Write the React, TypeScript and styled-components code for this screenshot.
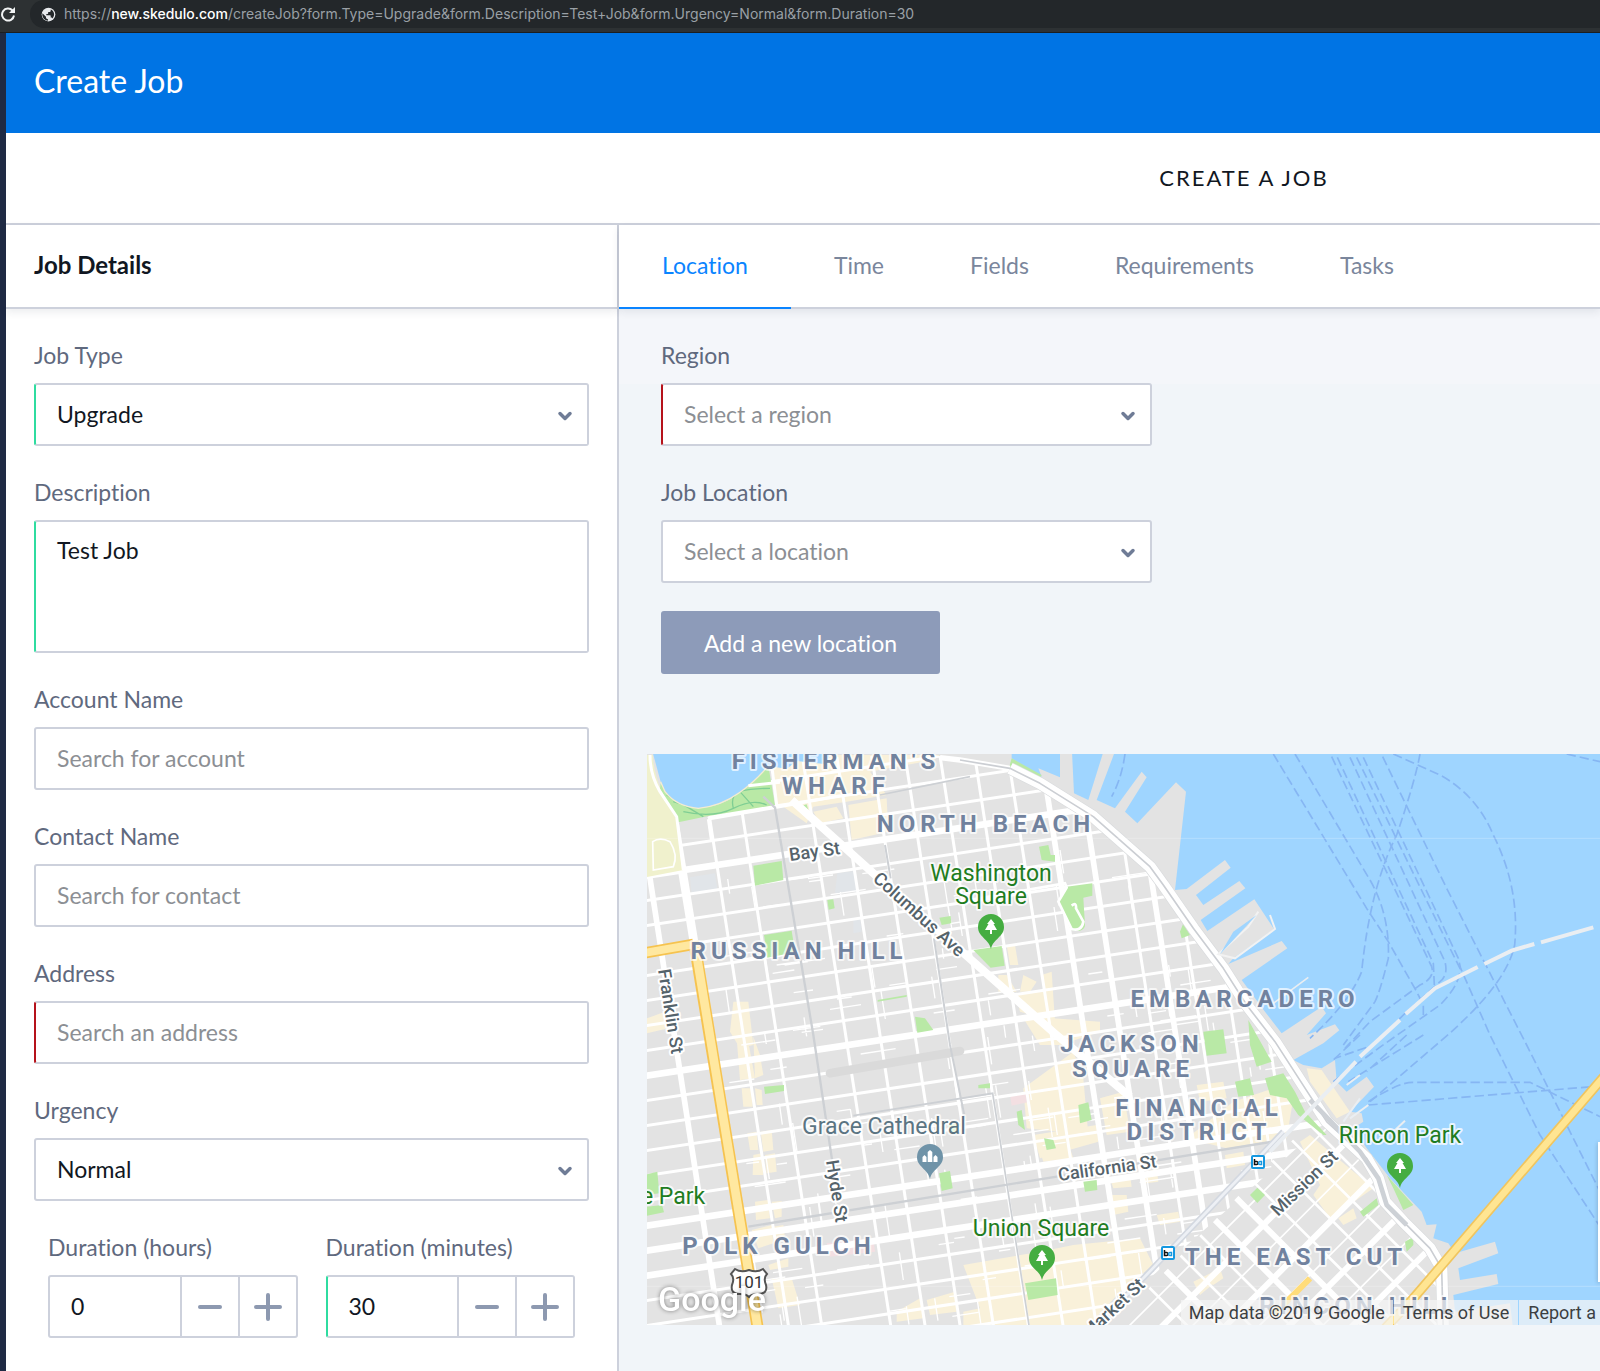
import React, { useState } from "react";
import styled, { createGlobalStyle } from "styled-components";

const sans = `Lato, "Open Sans", "Liberation Sans", sans-serif`;
const roboto = `Roboto, "Liberation Sans", sans-serif`;

const color = {
  border: "#cdd1dc",
  text: "#111722",
  label: "#5f697e",
  muted: "#8c8f94",
  tab: "#7a869c",
  accent: "#0a84ff",
  header: "#0074e4",
  valid: "#2fdca0",
  invalid: "#b5121b",
  icon: "#6f7c96",
};

const GlobalStyle = createGlobalStyle`
  *, *::before, *::after { box-sizing: border-box; }
  html, body, #root { min-height: 100vh; }
  body {
    margin: 0;
    background: #fff;
    color: ${color.text};
    font: 400 23px/28px ${sans};
    font-variant-ligatures: none;
    overflow-x: hidden;
  }
  #root { display: flex; flex-direction: column; }
  button, input, select, textarea { font: inherit; font-variant-ligatures: none; color: inherit; }
`;

/* ---------- browser bar ---------- */

const BrowserBar = styled.div`
  display: flex;
  align-items: flex-start;
  height: 33px;
  background: #2d3133;
  border-bottom: 1px solid #1b1e20;
`;

const ReloadButton = styled.button`
  display: flex;
  align-items: center;
  width: 30px;
  height: 28px;
  padding: 0;
  border: 0;
  background: none;
  color: #f1f3f4;
`;

const AddressBar = styled.div`
  display: flex;
  flex: 1;
  align-items: center;
  gap: 8px;
  height: 28px;
  padding-left: 11px;
  border-radius: 14px 0 0 14px;
  background: #23272a;
  color: #9aa0a6;
  font: 400 14px/28px Inter, Roboto, sans-serif;
  white-space: nowrap;
  overflow: hidden;
`;

const Host = styled.span`
  color: #fff;
  font-weight: 500;
`;

/* ---------- page frame ---------- */

const Page = styled.div`
  display: flex;
  flex: 1;
  flex-direction: column;
  border-left: 6px solid #1f2a44;
`;

const Header = styled.header`
  display: flex;
  align-items: center;
  height: 100px;
  padding: 0 28px 4px;
  background: ${color.header};
  color: #fff;
`;

const PageTitle = styled.h1`
  margin: 0;
  font-size: 32px;
  font-weight: 400;
  line-height: 40px;
`;

const SubHeader = styled.div`
  display: flex;
  align-items: center;
  justify-content: center;
  height: 92px;
  padding-left: 882px;
  border-bottom: 2px solid ${color.border};
`;

const SubTitle = styled.h2`
  margin: 0;
  font-size: 22px;
  font-weight: 400;
  line-height: 28px;
  letter-spacing: 2px;
  text-transform: uppercase;
  white-space: nowrap;
`;

const Columns = styled.div`
  display: grid;
  flex: 1;
  grid-template-columns: 613px minmax(0, 1fr);
`;

const DetailsPanel = styled.section`
  border-right: 2px solid ${color.border};
  background: #fff;
`;

const PanelBar = styled.div`
  position: relative;
  display: flex;
  align-items: center;
  height: 84px;
  border-bottom: 2px solid ${color.border};
  background: #fff;
  box-shadow: 0 3px 8px rgba(30, 40, 70, 0.09);
`;

const PanelTitle = styled.h3`
  margin: 0;
  padding: 0 28px 2px;
  font-size: 24px;
  font-weight: 700;
`;

const DetailsForm = styled.form`
  display: flex;
  flex-direction: column;
  gap: 32px;
  padding: 32px 28px;
`;

const TabPanel = styled.section`
  display: flex;
  flex-direction: column;
  min-width: 0;
`;

const Tab = styled.button<{ $active?: boolean }>`
  height: 84px;
  margin-bottom: -2px;
  padding: 0 43px 2px;
  border: 0;
  border-bottom: 2px solid ${(p) => (p.$active ? color.accent : "transparent")};
  background: none;
  color: ${(p) => (p.$active ? color.accent : color.tab)};
  cursor: pointer;
`;

const LocationBody = styled.div`
  flex: 1;
  padding: 32px 0 46px 28px;
  background: linear-gradient(#f4f6fa 75px, #f1f5f9 75px);
`;

const LocationForm = styled.form`
  display: flex;
  flex-direction: column;
  gap: 32px;
  max-width: 505px;
  padding-left: 14px;
`;

const Actions = styled.div`
  padding: 28px 14px 80px;
`;

const AddButton = styled.button`
  display: block;
  height: 63px;
  padding: 0 43px;
  border: 0;
  border-radius: 3px;
  background: #8d9bb9;
  color: #fff;
`;

/* ---------- form controls ---------- */

type Status = "valid" | "invalid" | undefined;

const edge = (s: Status) =>
  s === "valid" ? color.valid : s === "invalid" ? color.invalid : color.border;

const Field = styled.div`
  display: flex;
  flex: 1;
  flex-direction: column;
  gap: 14px;
  min-width: 0;
`;

const Label = styled.label`
  color: ${color.label};
  line-height: 28px;
  white-space: nowrap;
`;

const TextInput = styled.input<{ $status?: Status }>`
  width: 100%;
  height: 63px;
  padding: 0 21px 2px;
  border: 2px solid ${color.border};
  border-left-color: ${(p) => edge(p.$status)};
  border-radius: 3px;
  background: #fff;
  outline: 0;
  &::placeholder { color: ${color.muted}; opacity: 1; }
`;

const TextArea = styled.textarea<{ $status?: Status }>`
  display: block;
  width: 100%;
  height: 133px;
  padding: 14px 21px;
  border: 2px solid ${color.border};
  border-left-color: ${(p) => edge(p.$status)};
  border-radius: 3px;
  background: #fff;
  outline: 0;
  resize: none;
`;

const SelectWrap = styled.div`
  position: relative;
`;

const Select = styled.select<{ $status?: Status; $empty?: boolean }>`
  display: block;
  width: 100%;
  height: 63px;
  padding: 0 56px 2px 21px;
  border: 2px solid ${color.border};
  border-left-color: ${(p) => edge(p.$status)};
  border-radius: 3px;
  background: #fff;
  color: ${(p) => (p.$empty ? color.muted : color.text)};
  appearance: none;
  outline: 0;
`;

const Chevron = styled.svg`
  position: absolute;
  top: 26px;
  right: 16px;
  width: 16px;
  height: 14px;
  pointer-events: none;
`;

const DurationRow = styled.div`
  display: flex;
  gap: 28px;
  padding: 0 14px;
`;

const Stepper = styled.div<{ $status?: Status }>`
  display: flex;
  height: 63px;
  border: 2px solid ${color.border};
  border-left-color: ${(p) => edge(p.$status)};
  border-radius: 3px;
  background: #fff;
`;

const StepInput = styled.input`
  flex: 1;
  min-width: 0;
  padding: 0 21px 2px;
  border: 0;
  background: none;
  outline: 0;
`;

const StepButton = styled.button`
  display: flex;
  align-items: center;
  justify-content: center;
  width: 58px;
  padding: 0;
  border: 0;
  border-left: 2px solid ${color.border};
  background: none;
  color: #8d99b0;
`;

/* ---------- map ---------- */

const MapFrame = styled.div`
  position: relative;
  height: 571px;
  overflow: hidden;
  background: #9fd5ff;
`;

const MapSvg = styled.svg`
  display: block;
  width: 100%;
  height: 571px;
  font-family: ${roboto};
`;

const MapFooter = styled.div`
  position: absolute;
  right: 0;
  bottom: 0;
  display: flex;
  height: 25px;
  color: #3c3f42;
  font: 400 18px/25px ${roboto};
  white-space: nowrap;
`;

const FooterText = styled.span`
  padding: 0 8px;
  background: rgba(245, 245, 245, 0.72);
`;

const FooterLink = styled.a`
  margin-left: 1px;
  padding: 0 9px;
  background: rgba(245, 245, 245, 0.72);
  color: inherit;
  text-decoration: none;
  &:last-child { padding-right: 4px; }
`;

const ZoomControl = styled.div`
  position: absolute;
  right: 0;
  bottom: 43px;
  width: 2px;
  height: 140px;
  background: #fff;
  box-shadow: 0 1px 4px rgba(0, 0, 0, 0.3);
`;

const District = styled.text`
  fill: #71829e;
  stroke: rgba(255, 255, 255, 0.7);
  stroke-width: 4px;
  stroke-linejoin: round;
  paint-order: stroke;
  font-size: 24px;
  font-weight: 700;
  letter-spacing: 5px;
  text-anchor: middle;
`;

const Place = styled.text<{ $tone?: string }>`
  fill: ${(p) => p.$tone || "#1f7d1f"};
  stroke: rgba(255, 255, 255, 0.75);
  stroke-width: 4px;
  stroke-linejoin: round;
  paint-order: stroke;
  font-size: 23px;
  text-anchor: middle;
`;

const Street = styled.text`
  fill: #55636b;
  stroke: #fff;
  stroke-width: 4px;
  stroke-linejoin: round;
  paint-order: stroke;
  font-size: 18px;
  font-weight: 500;
`;

const Wordmark = styled.text`
  fill: #fff;
  font-size: 34px;
  font-weight: 500;
  filter: drop-shadow(0 0 2px rgba(0, 0, 0, 0.45));
`;

/* Map geometry is drawn on a plane three times finer than the screen. */

const LAND =
  "M0 0H1115V40L1205 95L1195 70L1260 97V0H1295L1302 145L1345 165L1388 27L1396 0H1430L1422 27L1370 165L1425 190L1505 80L1520 97L1455 200L1492 235L1608 112L1638 140L1605 435L1640 432L1755 345L1772 368L1668 450L1690 480L1798 408L1816 430L1682 525L1702 558L1843 463L1902 552L1780 640L1765 657L1925 588L1942 610L1805 705L1875 800L1925 865L2045 785L2058 805L2000 870L2085 838L2098 856L2050 895L1960 945L1990 960L2045 970L2085 945L2090 1010L2120 1040L2180 995L2202 1025L2130 1100L2165 1105L2170 1130L2140 1150L2180 1210L2250 1300L2345 1400L2360 1440L2390 1438L2380 1480L2425 1495L2445 1525L2565 1490L2575 1525L2455 1570L2460 1605L2570 1587L2575 1617L2440 1650L2445 1700L2610 1675L2620 1760H0Z";

const WATERFRONT: [number, number][] = [
  [960, 45], [1110, 70], [1200, 115], [1360, 215], [1530, 365], [1570, 420],
  [1660, 550], [1750, 670], [1820, 780], [1905, 890], [2060, 1130], [2180, 1240],
  [2215, 1300], [2235, 1370], [2290, 1430], [2370, 1510], [2405, 1570], [2410, 1760],
];

const pts = (list: [number, number][]) => list.map((p) => p.join(" ")).join(" ");

const CITY = `0 380 100 240 200 220 400 40 880 30 ${pts(WATERFRONT.slice(0, 11))} 1370 1740 1340 1760 0 1760`;
const SOMA = `2060 1080 1400 1760 2410 1760 ${pts(WATERFRONT.slice(10).reverse())}`;

const WIDE_ROWS = [0, 8, 14, 15, 16];
const rows = Array.from({ length: 30 }, (_, i) => i - 3).map((k) => ({
  y: 395 + 75 * k,
  w: WIDE_ROWS.includes(k) ? 20 : 9,
}));
const cols = [-32, 175, 275, 482, 585, 690, 790, 895, 999, 1099, 1199, 1306, 1404, 1472, 1550, 1650, 1750].map(
  (x) => ({ x, w: [-32, 1199, 1306, 1472].includes(x) ? 17 : 9 })
);

/* Short lanes inside the blocks, spread by a small repeatable sequence. */
const lanes = (() => {
  let s = 17;
  const next = () => (s = (s * 16807) % 2147483647) / 2147483647;
  return Array.from({ length: 210 }, () => {
    const x = 250 + next() * 1650;
    const y = 300 + next() * 1420;
    const l = 30 + next() * 80;
    return next() > 0.5
      ? `M${x | 0} ${y | 0}l${l | 0} ${(-l * 0.155) | 0}`
      : `M${x | 0} ${y | 0}l${(l * 0.14) | 0} ${(l * 0.9) | 0}`;
  }).join("");
})();

const SHOPS = [
  "M400 60L520 30H900L880 45L690 80L740 150L620 170L520 185L500 235L430 185L410 180Z",
  "M520 200L590 185L610 220L540 235Z M625 180L740 160L745 260L635 285Z",
  "M280 770H325L340 900L300 910L270 860Z M290 880L325 890L345 1000L300 1005Z M340 875L360 930L370 990L345 1000Z",
  "M305 1030H335L338 1085H310Z M345 1030L365 1035L368 1080H350Z M322 1165L350 1160L355 1215H330Z M362 1160L395 1155L400 1215L370 1220Z",
  "M340 1230L365 1225L370 1290L338 1290Z M375 1230L405 1225L410 1280L380 1285Z M345 1370L385 1365L390 1420L348 1425Z M395 1370L425 1368V1415L405 1420Z",
  "M335 1455L395 1440L400 1495L355 1510Z M400 1445L430 1440L435 1480L405 1490Z M385 1560L445 1540V1565L390 1575Z M395 1600H455L480 1680L415 1690Z M770 1700L840 1660L850 1720L770 1730Z M860 1665L945 1640L950 1700L870 1710Z",
  "M21 820L75 800L85 850L21 865Z",
  "M1100 600H1125L1135 660H1110Z M1075 690H1100L1130 740H1075Z M1150 690L1190 710L1170 740H1140Z M1205 690L1235 680L1245 830L1140 800L1130 750L1215 735Z",
  "M1150 820L1240 820L1380 830V860L1260 900H1200Z",
  "M1150 1030L1300 920L1330 1000L1345 1170L1160 1150Z M1380 1060L1450 1040L1470 1160L1400 1170Z",
  "M1180 1170L1370 1140L1375 1190L1200 1240Z",
  "M1670 1020L1750 1010L1760 1060L1680 1070Z M1780 1070L1900 1030L1960 1060L1940 1180L1760 1210L1640 1180Z",
  "M1200 1220L1290 1210L1300 1240L1210 1250Z M1755 1230L1810 1220L1815 1260L1760 1270Z M1500 1290L1550 1270L1555 1310L1520 1315Z M1410 1300L1470 1290L1475 1325L1420 1330Z",
  "M970 1560L1200 1520L1300 1500L1500 1480L1540 1560L1440 1640L1350 1740H970V1700L1020 1690Z",
  "M1405 1350L1460 1350L1465 1400L1420 1410Z M1550 1410L1615 1400L1620 1430L1560 1440Z",
  "M2000 970L2045 975L2130 1100L2090 1120L2010 1010Z M1980 1190L2010 1170L2200 1330L2070 1420L2020 1350L2040 1320Z M2095 1420L2140 1390L2150 1420L2110 1440Z M1700 1600L1740 1570L1750 1600L1720 1620Z",
  "M1660 1610L1720 1580L1740 1600L1680 1650Z",
];

const PARKS = [
  "M340 362L425 348L430 405L345 422Z",
  "M372 570L455 557L465 622L382 638Z",
  "M562 465L580 463L584 490L566 494Z",
  "M898 518L932 513L934 535L905 540Z",
  "M713 765L800 750V755L713 770Z",
  "M825 815L855 820L880 855L832 863Z",
  "M485 182L500 178L505 195Z",
  "M372 1025L432 1020V1038L375 1047Z",
  "M21 1288L52 1280L58 1345L21 1350Z M21 1385L66 1380L72 1402L21 1412Z",
  "M897 1285L930 1278L938 1330L905 1338Z M925 1140L955 1135V1160L930 1165Z",
  "M1115 40L1205 90L1195 108L1108 65Z",
  "M1197 305L1225 300L1232 330H1245V350L1205 345Z",
  "M1280 425L1357 415V452L1330 458L1335 540C1335 560 1300 565 1290 548L1255 470Z",
  "M1000 615L1085 603L1094 662L1052 668Z",
  "M1690 860L1750 853L1760 925L1700 932Z M1825 825L1850 870L1895 950L1850 965L1830 900Z",
  "M1620 560L1630 535L1650 570L1625 580Z",
  "M1785 1010L1830 1000L1842 1050L1795 1055Z M1875 1000L1930 985L1965 1040L1995 1100L2060 1170L2050 1170L1975 1110L1940 1060L1890 1050Z",
  "M1315 1080L1345 1072L1355 1125L1320 1135Z M1130 1100L1145 1095L1155 1155L1135 1140Z M1212 1180L1240 1185L1248 1210L1220 1215Z",
  "M1330 1310L1370 1305L1372 1335L1335 1340Z M1015 1020L1050 1015V1030H1015Z",
  "M1155 1615L1248 1600L1253 1650L1165 1665Z",
  "M1830 1350L1852 1328L1875 1350L1852 1374Z",
  "M2160 1400L2210 1360L2215 1380L2170 1415Z M2240 1290L2320 1380L2290 1395L2260 1330Z M2295 1490L2320 1475V1500L2300 1520Z",
];

const FERRIES = [
  "M1900 27L2180 490L2245 590L2330 740L2350 780V810",
  "M1965 27L2190 405Q2250 510 2245 640Q2220 740 2205 770L2110 900",
  "M2075 35L2375 665Q2385 700 2340 720L2190 830L2115 910",
  "M2092 37L2380 655L2383 720",
  "M2130 37L2415 650Q2425 690 2400 710L2290 810L2200 900L2085 940",
  "M2150 37L2425 600L2460 670Q2460 720 2400 780L2215 910L2080 1010",
  "M2170 37L2455 640L2462 670L2550 870L2700 1170L2880 1445",
  "M2228 35L2420 430L2660 900L2740 1060L2880 1340",
  "M2340 27Q2325 110 2270 270Q2190 430 2165 680Q2130 770 2010 880",
  "M2260 27L2400 90Q2510 150 2560 270Q2640 430 2624 600Q2600 720 2400 890L2190 1070",
  "M2780 27L2880 50",
  "M1455 27Q1445 100 1415 155",
  "M2185 1080L2880 1023 M2185 1070Q2280 1010 2320 1012H2670L2880 1115",
  "M2350 870L2125 1010 M2300 870L2180 980 M2160 870L2080 945",
];

const WEST_BAY =
  "M32 0L62 110L75 140Q110 185 175 190Q240 185 300 142Q350 105 385 62L440 72L470 48L560 58L575 0Z";

const trace = (list: [number, number][]) => "M" + list.map((p) => p.join(" ")).join("L");

function TreePin({ x, y }: { x: number; y: number }) {
  return (
    <g transform={`translate(${x} ${y})`}>
      <path d="M0 22C-2 12-13 10-13 0A13 13 0 0 1 13 0C13 10 2 12 0 22Z" fill="#45ad41" />
      <path d="M0-8L4-3H2.500L6 3H1V7H-1V3H-6L-2.500-3H-4Z" fill="#fff" />
    </g>
  );
}

function LandmarkPin({ x, y }: { x: number; y: number }) {
  return (
    <g transform={`translate(${x} ${y})`}>
      <path d="M0 22C-2 12-13 10-13 0A13 13 0 0 1 13 0C13 10 2 12 0 22Z" fill="#6f93a8" />
      <path d="M-7.500 5V0L-5.500-2L-3.500 0V5Z M-2.300 5V-5L0-7L2.300-5V5Z M3.500 5V0L5.500-2L7.500 0V5Z" fill="#fff" />
    </g>
  );
}

function Station({ x, y }: { x: number; y: number }) {
  return (
    <g transform={`translate(${x} ${y})`}>
      <rect x="-6" y="-6" width="12" height="12" rx="1" fill="#fff" stroke="#1698e0" strokeWidth="2" />
      <path d="M-3.500-3V2.500H-1.500A1.500 1.500 0 0 0-1.500-.5H-3.500" fill="none" stroke="#111" strokeWidth="1.500" />
      <path d="M3.500-.5V2.500H2A1.500 1.500 0 0 1 2-.5Z" fill="none" stroke="#1698e0" strokeWidth="1.500" />
    </g>
  );
}

function CityMap() {
  return (
    <MapSvg viewBox="0 0 953 571" preserveAspectRatio="xMinYMin slice" role="img" aria-label="Map of San Francisco">
      <defs>
        <clipPath id="city"><polygon points={CITY} /></clipPath>
        <clipPath id="soma"><polygon points={SOMA} /></clipPath>
      </defs>
      <g transform="scale(0.33333) translate(-21 -27)" fill="none">
        <path d={LAND} fill="#e3e3e3" />
        <g fill="#f9f1da">{SHOPS.map((d) => <path key={d} d={d} />)}</g>
        <g fill="#e1e5e9">
          <path d="M150 397L225 385L232 432L155 445Z M592 385L645 377L650 440L585 445Z M640 520L660 515L665 560L640 565Z" />
        </g>
        <path d="M1110 1050L1165 1040L1170 1070L1115 1082Z M560 1495L700 1480L705 1520L570 1535Z" fill="#f3dfe2" />

        <g clipPath="url(#city)" stroke="#fff">
          <path d={lanes} strokeWidth="4" />
          {rows.map((r) => <path key={r.y} d={`M0 ${r.y}L2300 ${r.y - 350}`} strokeWidth={r.w} />)}
          {cols.map((c) => <path key={c.x} d={`M${c.x} 0L${c.x + 273} 1760`} strokeWidth={c.w} />)}
          <path d="M98 200L165 610" strokeWidth="26" />
        </g>
        <path d="M570 985L960 918" stroke="#dadada" strokeWidth="26" strokeLinecap="round" />

        <g clipPath="url(#soma)" stroke="#fff">
          {[3210, 3400, 3600, 3790].map((n) => <path key={n} d={`M${n - 1760} 1760L${n - 1000} 1000`} strokeWidth="5" />)}
          {[3310, 3500, 3690, 3880].map((n) => <path key={n} d={`M${n - 1760} 1760L${n - 1000} 1000`} strokeWidth="18" />)}
          {[-100, 90, 210, 530, 650, 770, 870].map((n) => <path key={n} d={`M${1000 + n} 1000L${1760 + n} 1760`} strokeWidth="8" />)}
          {[0, 300, 430].map((n) => <path key={n} d={`M${1000 + n} 1000L${1760 + n} 1760`} strokeWidth="18" />)}
        </g>
        <g fill="#b9e9a6">{PARKS.map((d) => <path key={d} d={d} />)}</g>

        <path d="M0 30H38Q45 130 110 215L130 375L0 400Z" fill="#f0f1cd" />
        <path d="M38 290Q60 275 90 290Q115 330 100 365L40 375Z" stroke="#fff" strokeWidth="5" />
        <path d="M62 115Q100 185 175 190Q250 185 300 142Q350 105 385 62L405 180L205 213L115 232L60 130Z" fill="#b9e9a6" />
        <path d="M100 170Q190 200 240 165T390 130 M130 200Q220 220 280 190T380 180 M280 190Q270 150 300 140L340 185 M80 150L140 185L190 215" stroke="#7fce94" strokeWidth="4" />
        <path d={WEST_BAY} fill="#9fd5ff" />
        <path d="M62 110L75 140Q110 185 175 190Q240 185 300 142Q350 105 385 62" stroke="#f4ecd0" strokeWidth="4" />
        <path d="M30 30Q30 90 60 140L110 215L130 375 M325 122L420 112 M205 222L215 290 M205 222L410 187L600 152" stroke="#fff" strokeWidth="9" />
        <path d="M395 60L410 180" stroke="#fff" strokeWidth="9" />

        <path d="M455 165L700 385L1000 650L1240 862L1470 1055" stroke="#fff" strokeWidth="24" />
        <g stroke="#cdd0d4" strokeWidth="7">
          <path d="M370 155L405 188L520 870L580 1270" />
          <path d="M735 300L752 400 M882 580L930 900L975 1120" strokeWidth="6" />
          <path d="M640 1112L1058 1045L1170 1760" strokeWidth="5" />
          <path d="M325 1445L960 1342L1250 1295L1910 1188" />
          <path d="M720 150L990 95" strokeWidth="5" />
        </g>

        <path d="M1930 1160L1500 1610L1370 1740" stroke="#d3d8e0" strokeWidth="18" />
        <path d="M1930 1160L1500 1610L1370 1740" stroke="#edf0f5" strokeWidth="8" />

        <path d="M900 38L960 45L1110 70" stroke="#fff" strokeWidth="16" />
        <path d={trace(WATERFRONT.slice(1))} stroke="#d9dbdd" strokeWidth="38" strokeLinejoin="round" />
        <path d={trace(WATERFRONT.slice(1))} stroke="#fff" strokeWidth="34" strokeLinejoin="round" />
        <path d={trace(WATERFRONT)} stroke="#cbced3" strokeWidth="5" strokeLinejoin="round" />
        <path d="M2010 1065L2160 1220L2215 1300L2240 1380L2300 1440" stroke="#cdd1d6" strokeWidth="14" />
        <path d="M1295 482Q1310 470 1308 490L1330 530Q1325 560 1295 552L1255 470L1280 428L1275 415L960 470" stroke="#fff" strokeWidth="8" />
        <path d="M1890 510L1905 552L1785 640L1735 628L1825 545L1855 500" stroke="#f2f2f2" strokeWidth="6" />
        <path d="M1740 628L1850 510L1780 560Z" fill="#9fd5ff" />

        <g stroke="#86b6f3" strokeWidth="5" strokeDasharray="28 12">{FERRIES.map((d) => <path key={d} d={d} />)}</g>
        <path d="M0 280H2900 M0 1624H2900" stroke="#fff" strokeWidth="2" opacity="0.35" />

        <g stroke="#eaeef2" strokeWidth="12">
          <path d="M2860 547L2703 592 M2683 597L2615 617L2533 657 M2513 666L2385 730L2297 807" />
          <path d="M2280 825L2160 935 M2148 950L1890 1220" />
          <path d="M1900 775L2005 697" strokeWidth="5" />
          <path d="M2110 1130L2160 1060 M2130 1120L2185 1080 M2120 1020L2160 990 M2260 1160L2295 1127" strokeWidth="6" />
        </g>

        <path d="M0 626L160 598" stroke="#f6c34f" strokeWidth="34" />
        <path d="M165 605L355 1760" stroke="#f6c34f" strokeWidth="36" />
        <path d="M0 626L160 598" stroke="#ffe8a0" strokeWidth="24" />
        <path d="M163 588L355 1760" stroke="#ffe8a0" strokeWidth="26" />
        <path d="M2900 985L2320 1660L2235 1750" stroke="#f0c55f" strokeWidth="30" />
        <path d="M2900 985L2320 1660L2235 1750" stroke="#ffe592" strokeWidth="20" />
        <path d="M2010 1600L1900 1710" stroke="#ffdc7a" strokeWidth="18" />
      </g>

      <District x="189" y="15">FISHERMAN'S</District>
      <District x="189" y="40">WHARF</District>
      <District x="339" y="78">NORTH BEACH</District>
      <District x="152" y="205">RUSSIAN HILL</District>
      <District x="598" y="253">EMBARCADERO</District>
      <District x="485" y="298">JACKSON</District>
      <District x="486" y="323">SQUARE</District>
      <District x="552" y="362">FINANCIAL</District>
      <District x="552" y="386">DISTRICT</District>
      <District x="132" y="500">POLK GULCH</District>
      <District x="649" y="511">THE EAST CUT</District>
      <District x="712" y="560">RINCON HILL</District>

      <Street transform="translate(143 107) rotate(-8)">Bay St</Street>
      <Street transform="translate(225 126) rotate(42)">Columbus Ave</Street>
      <Street transform="translate(11 216) rotate(81)">Franklin St</Street>
      <Street transform="translate(179 407) rotate(81)">Hyde St</Street>
      <Street transform="translate(412 427) rotate(-8)">California St</Street>
      <Street transform="translate(499 532) rotate(-43)" textAnchor="end">Market St</Street>
      <Street transform="translate(631 463) rotate(-44)">Mission St</Street>

      <Place x="344" y="127">Washington</Place>
      <Place x="344" y="150">Square</Place>
      <Place x="237" y="380" $tone="#5b7482">Grace Cathedral</Place>
      <Place x="26" y="450">e Park</Place>
      <Place x="394" y="482">Union Square</Place>
      <Place x="753" y="389">Rincon Park</Place>

      <TreePin x={344} y={173} />
      <TreePin x={395} y={504} />
      <TreePin x={753} y={412} />
      <LandmarkPin x={283} y={403} />
      <Station x={611} y={408} />
      <Station x={521} y={499} />

      <g transform="translate(102 528)">
        <path d="M-14-13Q-8-9 0-12Q8-9 14-13L18-8Q14-4 17 3Q19 12 9 12Q3 12 0 15Q-3 12-9 12Q-19 12-17 3Q-14-4-18-8Z" fill="#fff" stroke="#555" strokeWidth="2" />
        <text y="6" textAnchor="middle" fontSize="17" fill="#333">101</text>
      </g>
      <Wordmark x="11" y="557">Google</Wordmark>
    </MapSvg>
  );
}

/* ---------- composed controls ---------- */

type SelectFieldProps = {
  id: string;
  label: string;
  options: string[];
  placeholder?: string;
  initial?: string;
  status?: Status;
};

function SelectField({ id, label, options, placeholder, initial = "", status }: SelectFieldProps) {
  const [value, setValue] = useState(initial);
  return (
    <Field>
      <Label htmlFor={id}>{label}</Label>
      <SelectWrap>
        <Select id={id} value={value} $empty={!value} $status={status} onChange={(e) => setValue(e.target.value)}>
          {placeholder && <option value="">{placeholder}</option>}
          {options.map((o) => <option key={o}>{o}</option>)}
        </Select>
        <Chevron viewBox="0 0 16 14" aria-hidden="true">
          <path d="M3 4.500L8 9.500L13 4.500" fill="none" stroke={color.icon} strokeWidth="3.500" strokeLinecap="round" strokeLinejoin="round" />
        </Chevron>
      </SelectWrap>
    </Field>
  );
}

function SearchField({ id, label, placeholder, status }: { id: string; label: string; placeholder: string; status?: Status }) {
  return (
    <Field>
      <Label htmlFor={id}>{label}</Label>
      <TextInput id={id} placeholder={placeholder} $status={status} />
    </Field>
  );
}

function DurationField({ id, label, initial, step, status }: { id: string; label: string; initial: number; step: number; status?: Status }) {
  const [value, setValue] = useState(initial);
  return (
    <Field>
      <Label htmlFor={id}>{label}</Label>
      <Stepper $status={status}>
        <StepInput id={id} inputMode="numeric" value={value} onChange={(e) => setValue(Number(e.target.value) || 0)} />
        <StepButton type="button" aria-label={`Decrease ${label}`} onClick={() => setValue(Math.max(0, value - step))}>
          <svg width="28" height="28" viewBox="0 0 28 28" stroke="currentColor" strokeWidth="4" strokeLinecap="round"><path d="M4 14H24" /></svg>
        </StepButton>
        <StepButton type="button" aria-label={`Increase ${label}`} onClick={() => setValue(value + step)}>
          <svg width="28" height="28" viewBox="0 0 28 28" stroke="currentColor" strokeWidth="4" strokeLinecap="round"><path d="M2 14H26M14 2V26" /></svg>
        </StepButton>
      </Stepper>
    </Field>
  );
}

const TABS = ["Location", "Time", "Fields", "Requirements", "Tasks"];

export default function App() {
  const [tab, setTab] = useState(TABS[0]);
  return (
    <>
      <GlobalStyle />
      <BrowserBar>
        <ReloadButton type="button" aria-label="Reload">
          <svg width="16" height="16" viewBox="0 0 16 16" fill="none" stroke="currentColor" strokeWidth="2">
            <path d="M12.500 4.500A6 6 0 1 0 14 9.500" />
            <path d="M15 1V7H9Z" fill="currentColor" stroke="none" />
          </svg>
        </ReloadButton>
        <AddressBar>
          <svg width="15" height="15" viewBox="0 0 24 24" aria-hidden="true">
            <circle cx="12" cy="12" r="11" fill="#e8eaed" />
            <path d="M11 21.900C6 21.400 2.100 17.200 2.100 12L2.300 10L8 15.500V17C8 18 9 19 11 19ZM18.500 18.200C18 17.400 17.500 16.800 16.500 16.800H15.500V14C15.500 13.400 15 13 14.500 13H8.500V11H10.500C11 11 11.500 10.500 11.500 10V8H13.500C14.600 8 15.500 7.100 15.500 6V4C21 6 23 13 18.500 18.200Z" fill="#23272a" />
          </svg>
          <span>
            https://<Host>new.skedulo.com</Host>/createJob?form.Type=Upgrade&amp;form.Description=Test+Job&amp;form.Urgency=Normal&amp;form.Duration=30
          </span>
        </AddressBar>
      </BrowserBar>

      <Page>
        <Header><PageTitle>Create Job</PageTitle></Header>
        <SubHeader><SubTitle>Create a job</SubTitle></SubHeader>
        <Columns>
          <DetailsPanel>
            <PanelBar><PanelTitle>Job Details</PanelTitle></PanelBar>
            <DetailsForm>
              <SelectField id="type" label="Job Type" options={["Upgrade", "Install", "Repair"]} initial="Upgrade" status="valid" />
              <Field>
                <Label htmlFor="description">Description</Label>
                <TextArea id="description" defaultValue="Test Job" $status="valid" />
              </Field>
              <SearchField id="account" label="Account Name" placeholder="Search for account" />
              <SearchField id="contact" label="Contact Name" placeholder="Search for contact" />
              <SearchField id="address" label="Address" placeholder="Search an address" status="invalid" />
              <SelectField id="urgency" label="Urgency" options={["Normal", "Urgent", "Critical"]} initial="Normal" />
              <DurationRow>
                <DurationField id="hours" label="Duration (hours)" initial={0} step={1} />
                <DurationField id="minutes" label="Duration (minutes)" initial={30} step={5} status="valid" />
              </DurationRow>
            </DetailsForm>
          </DetailsPanel>

          <TabPanel>
            <PanelBar role="tablist">
              {TABS.map((t) => (
                <Tab key={t} type="button" role="tab" aria-selected={t === tab} $active={t === tab} onClick={() => setTab(t)}>
                  {t}
                </Tab>
              ))}
            </PanelBar>
            <LocationBody>
              <LocationForm>
                <SelectField id="region" label="Region" options={["San Francisco"]} placeholder="Select a region" status="invalid" />
                <SelectField id="location" label="Job Location" options={["Main office"]} placeholder="Select a location" />
              </LocationForm>
              <Actions><AddButton type="button">Add a new location</AddButton></Actions>
              <MapFrame>
                <CityMap />
                <ZoomControl />
                <MapFooter>
                  <FooterText>Map data ©2019 Google</FooterText>
                  <FooterLink href="#terms">Terms of Use</FooterLink>
                  <FooterLink href="#report">Report a</FooterLink>
                </MapFooter>
              </MapFrame>
            </LocationBody>
          </TabPanel>
        </Columns>
      </Page>
    </>
  );
}
